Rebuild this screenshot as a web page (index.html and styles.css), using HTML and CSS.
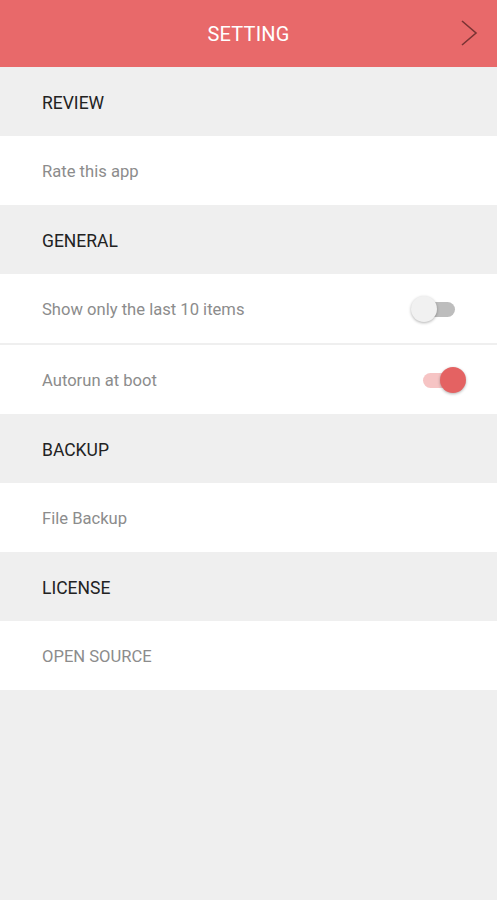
FILE: index.html
```html
<!DOCTYPE html>
<html>
<head>
<meta charset="utf-8">
<link rel="stylesheet" href="styles.css">
</head>
<body>
<div class="app">
  <header class="bar">
    <span class="title">SETTING</span>
    <svg class="chev" width="20" height="28" viewBox="0 0 20 28"><path d="M3 2 L17 14 L3 26" fill="none" stroke="#7a3434" stroke-width="1.6"/></svg>
  </header>
  <div class="section">REVIEW</div>
  <div class="item">Rate this app</div>
  <div class="section">GENERAL</div>
  <div class="item">Show only the last 10 items<span class="sw off"><span class="track"></span><span class="thumb"></span></span></div>
  <div class="divider"></div>
  <div class="item">Autorun at boot<span class="sw on"><span class="track"></span><span class="thumb"></span></span></div>
  <div class="section">BACKUP</div>
  <div class="item">File Backup</div>
  <div class="section">LICENSE</div>
  <div class="item">OPEN SOURCE</div>
</div>
</body>
</html>
```
FILE: styles.css
```css
html, body { margin: 0; padding: 0; }
body { background: #efefef; font-family: Roboto, "Liberation Sans", sans-serif; }
.app { width: 497px; min-height: 900px; background: #efefef; }
.bar { height: 67px; background: #e8696a; display: flex; align-items: center; justify-content: center; position: relative; }
.title { color: #fff; font-size: 20px; letter-spacing: 0.2px; }
.chev { position: absolute; right: 18px; top: 19px; }
.section { height: 69px; box-sizing: border-box; padding-top: 2px; display: flex; align-items: center; padding-left: 42px; font-size: 17.5px; color: #222; background: #efefef; }
.item { height: 69px; box-sizing: border-box; padding-top: 2px; display: flex; align-items: center; padding-left: 42px; padding-right: 32px; font-size: 16.6px; color: #8c8c8c; background: #fff; justify-content: space-between; }
.divider { height: 2px; background: #efefef; }
.sw { position: relative; width: 44px; height: 28px; display: block; margin-top: -2px; }
.track { position: absolute; left: 2px; right: 0; top: 7px; height: 15px; border-radius: 8px; }
.thumb { position: absolute; top: 1px; width: 26px; height: 26px; border-radius: 50%; box-shadow: 0 1px 3px rgba(0,0,0,0.3); }
.off { margin-right: 10px; }
.off .track { background: #bdbdbd; }
.off .thumb { left: 0; background: #f1f1f1; }
.on { margin-right: 0; }
.on .track { background: #f6c4c4; }
.on .thumb { right: -1px; background: #e46262; }
```
